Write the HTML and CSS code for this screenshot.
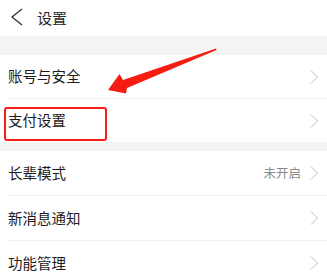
FILE: index.html
```html
<!DOCTYPE html>
<html lang="zh">
<head>
<meta charset="utf-8">
<link rel="stylesheet" href="styles.css">
</head>
<body>
<div class="page">
  <div class="header">
    <svg class="back" width="12" height="18" viewBox="0 0 12 18"><polyline points="11,1 1,9 11,17" fill="none" stroke="#333" stroke-width="1.4"/></svg>
    <span class="title">设置</span>
  </div>
  <div class="band band-top"></div>
  <div class="group group-first">
    <div class="row"><span class="label">账号与安全</span><span class="right"><svg class="chev" width="8" height="14" viewBox="0 0 8 14"><polyline points="1,0.5 7.5,7 1,13.5" fill="none" stroke="#bbb" stroke-width="1"/></svg></span></div>
    <div class="row row-marked"><span class="label">支付设置</span><span class="right"><svg class="chev" width="8" height="14" viewBox="0 0 8 14"><polyline points="1,0.5 7.5,7 1,13.5" fill="none" stroke="#bbb" stroke-width="1"/></svg></span><div class="mark"></div></div>
  </div>
  <div class="band band-mid"></div>
  <div class="group">
    <div class="row"><span class="label">长辈模式</span><span class="right"><span class="value">未开启</span><svg class="chev" width="8" height="14" viewBox="0 0 8 14"><polyline points="1,0.5 7.5,7 1,13.5" fill="none" stroke="#bbb" stroke-width="1"/></svg></span></div>
    <div class="row"><span class="label">新消息通知</span><span class="right"><svg class="chev" width="8" height="14" viewBox="0 0 8 14"><polyline points="1,0.5 7.5,7 1,13.5" fill="none" stroke="#bbb" stroke-width="1"/></svg></span></div>
    <div class="row"><span class="label">功能管理</span><span class="right"><svg class="chev" width="8" height="14" viewBox="0 0 8 14"><polyline points="1,0.5 7.5,7 1,13.5" fill="none" stroke="#bbb" stroke-width="1"/></svg></span></div>
  </div>
  <svg class="arrow" width="327" height="272" viewBox="0 0 327 272"><polygon points="216,48.5 123,80 119.5,74 108,90 126,93.5 127,88 216.5,50" fill="#f51c12"/></svg>
</div>
</body>
</html>
```
FILE: styles.css
```css
html, body {
  margin: 0;
  padding: 0;
  background: #ffffff;
}
.page {
  position: relative;
  width: 327px;
  height: 272px;
  overflow: hidden;
  font-family: "Noto Sans CJK SC", "Noto Sans", sans-serif;
  color: #1c1c1c;
}
.header {
  height: 36px;
  display: flex;
  align-items: center;
  padding-left: 11px;
  background: #fff;
}
.back {
  display: block;
  margin-top: -2px;
}
.title {
  margin-left: 14px;
  font-size: 15px;
  line-height: 1;
  color: #2a2a2a;
  margin-top: -1px;
}
.band {
  background: #f4f4f4;
}
.band-top {
  height: 19px;
}
.band-mid {
  height: 9px;
}
.group {
  background: #fff;
}
.row {
  position: relative;
  height: 44px;
  margin-left: 8px;
  padding-right: 9px;
  display: flex;
  align-items: center;
  justify-content: space-between;
}
.group-first .row {
  height: 43px;
}
.row + .row {
  border-top: 1px solid #f0f0f0;
}
.label {
  font-size: 14.5px;
  line-height: 1;
}
.right {
  display: flex;
  align-items: center;
}
.value {
  font-size: 12.5px;
  color: #8a8a8a;
  margin-right: 9px;
  line-height: 1;
}
.chev {
  display: block;
}
.mark {
  position: absolute;
  left: -4px;
  top: 8px;
  width: 99px;
  height: 30px;
  border: 2px solid #f41e16;
  border-radius: 3px;
}
.arrow {
  position: absolute;
  left: 0;
  top: 0;
  pointer-events: none;
}
```
